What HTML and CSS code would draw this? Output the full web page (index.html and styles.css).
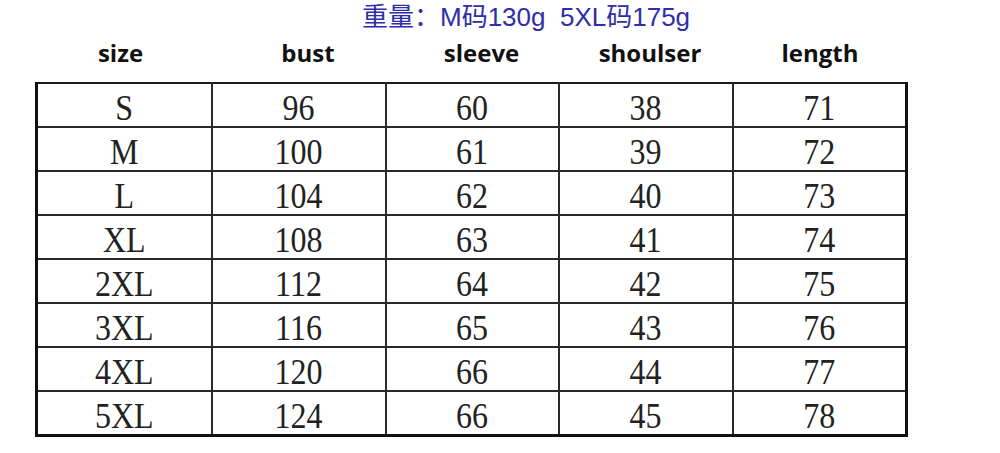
FILE: index.html
```html
<!DOCTYPE html>
<html>
<head>
<meta charset="utf-8">
<link rel="stylesheet" href="styles.css">
</head>
<body>
<div class="page">
  <div class="title">重量：M码130g&nbsp;&nbsp;5XL码175g</div>
  <div class="heads">
    <div class="h h-size">size</div>
    <div class="h h-bust">bust</div>
    <div class="h h-sleeve">sleeve</div>
    <div class="h h-shoulser">shoulser</div>
    <div class="h h-length">length</div>
  </div>
  <table class="chart">
    <colgroup><col class="c1"><col class="c2"><col class="c3"><col class="c4"><col class="c5"></colgroup>
    <tr><td><span>S</span></td><td><span>96</span></td><td><span>60</span></td><td><span>38</span></td><td><span>71</span></td></tr>
    <tr><td><span>M</span></td><td><span>100</span></td><td><span>61</span></td><td><span>39</span></td><td><span>72</span></td></tr>
    <tr><td><span>L</span></td><td><span>104</span></td><td><span>62</span></td><td><span>40</span></td><td><span>73</span></td></tr>
    <tr><td><span>XL</span></td><td><span>108</span></td><td><span>63</span></td><td><span>41</span></td><td><span>74</span></td></tr>
    <tr><td><span>2XL</span></td><td><span>112</span></td><td><span>64</span></td><td><span>42</span></td><td><span>75</span></td></tr>
    <tr><td><span>3XL</span></td><td><span>116</span></td><td><span>65</span></td><td><span>43</span></td><td><span>76</span></td></tr>
    <tr><td><span>4XL</span></td><td><span>120</span></td><td><span>66</span></td><td><span>44</span></td><td><span>77</span></td></tr>
    <tr><td><span>5XL</span></td><td><span>124</span></td><td><span>66</span></td><td><span>45</span></td><td><span>78</span></td></tr>
  </table>
</div>
</body>
</html>
```

FILE: styles.css
```css
html, body {
  margin: 0;
  padding: 0;
  background: #ffffff;
}
.page {
  width: 1000px;
  height: 453px;
  overflow: hidden;
}
.title {
  height: 34px;
  line-height: 34px;
  padding-left: 362px;
  font-family: "Liberation Sans", "Noto Sans CJK SC", sans-serif;
  font-size: 26px;
  color: #2e2eaa;
  white-space: nowrap;
}
.heads {
  margin-left: 35px;
  width: 870px;
  height: 38px;
  padding-bottom: 10px;
  display: grid;
  grid-template-columns: 175px 174px 173px 174px 174px;
  align-items: center;
}
.h {
  text-align: center;
  font-family: "Open Sans", "Noto Sans", sans-serif;
  font-weight: 700;
  font-size: 24px;
  color: #111;
  line-height: 38px;
}
.h-size { padding-right: 4px; }
.h-bust { padding-left: 22px; }
.h-sleeve { padding-left: 22px; }
.h-shoulser { padding-left: 12px; }
.h-length { padding-left: 4px; }

.chart {
  margin-left: 35px;
  width: 870px;
  border-collapse: collapse;
  table-layout: fixed;
  border-top: 2px solid #1a1a1a;
  border-left: 3px solid #111;
  border-right: 3px solid #111;
  border-bottom: 3px solid #111;
}
.c1 { width: 175px; }
.c2 { width: 174px; }
.c3 { width: 173px; }
.c4 { width: 174px; }
.c5 { width: 174px; }
.chart td {
  height: 42px;
  padding: 0;
  border: 2px solid #2a2a2a;
  text-align: center;
  vertical-align: middle;
  font-family: "Liberation Serif", serif;
  font-size: 32px;
  color: #222;
  line-height: 42px;
}
.chart td span {
  display: inline-block;
  transform: scaleY(1.12) translateY(2px);
}
.chart tr:first-child td { border-top: 2px solid #1a1a1a; }
.chart tr:last-child td { border-bottom: 3px solid #111; }
.chart td:first-child { border-left: 3px solid #111; }
.chart td:last-child { border-right: 3px solid #111; }
```
